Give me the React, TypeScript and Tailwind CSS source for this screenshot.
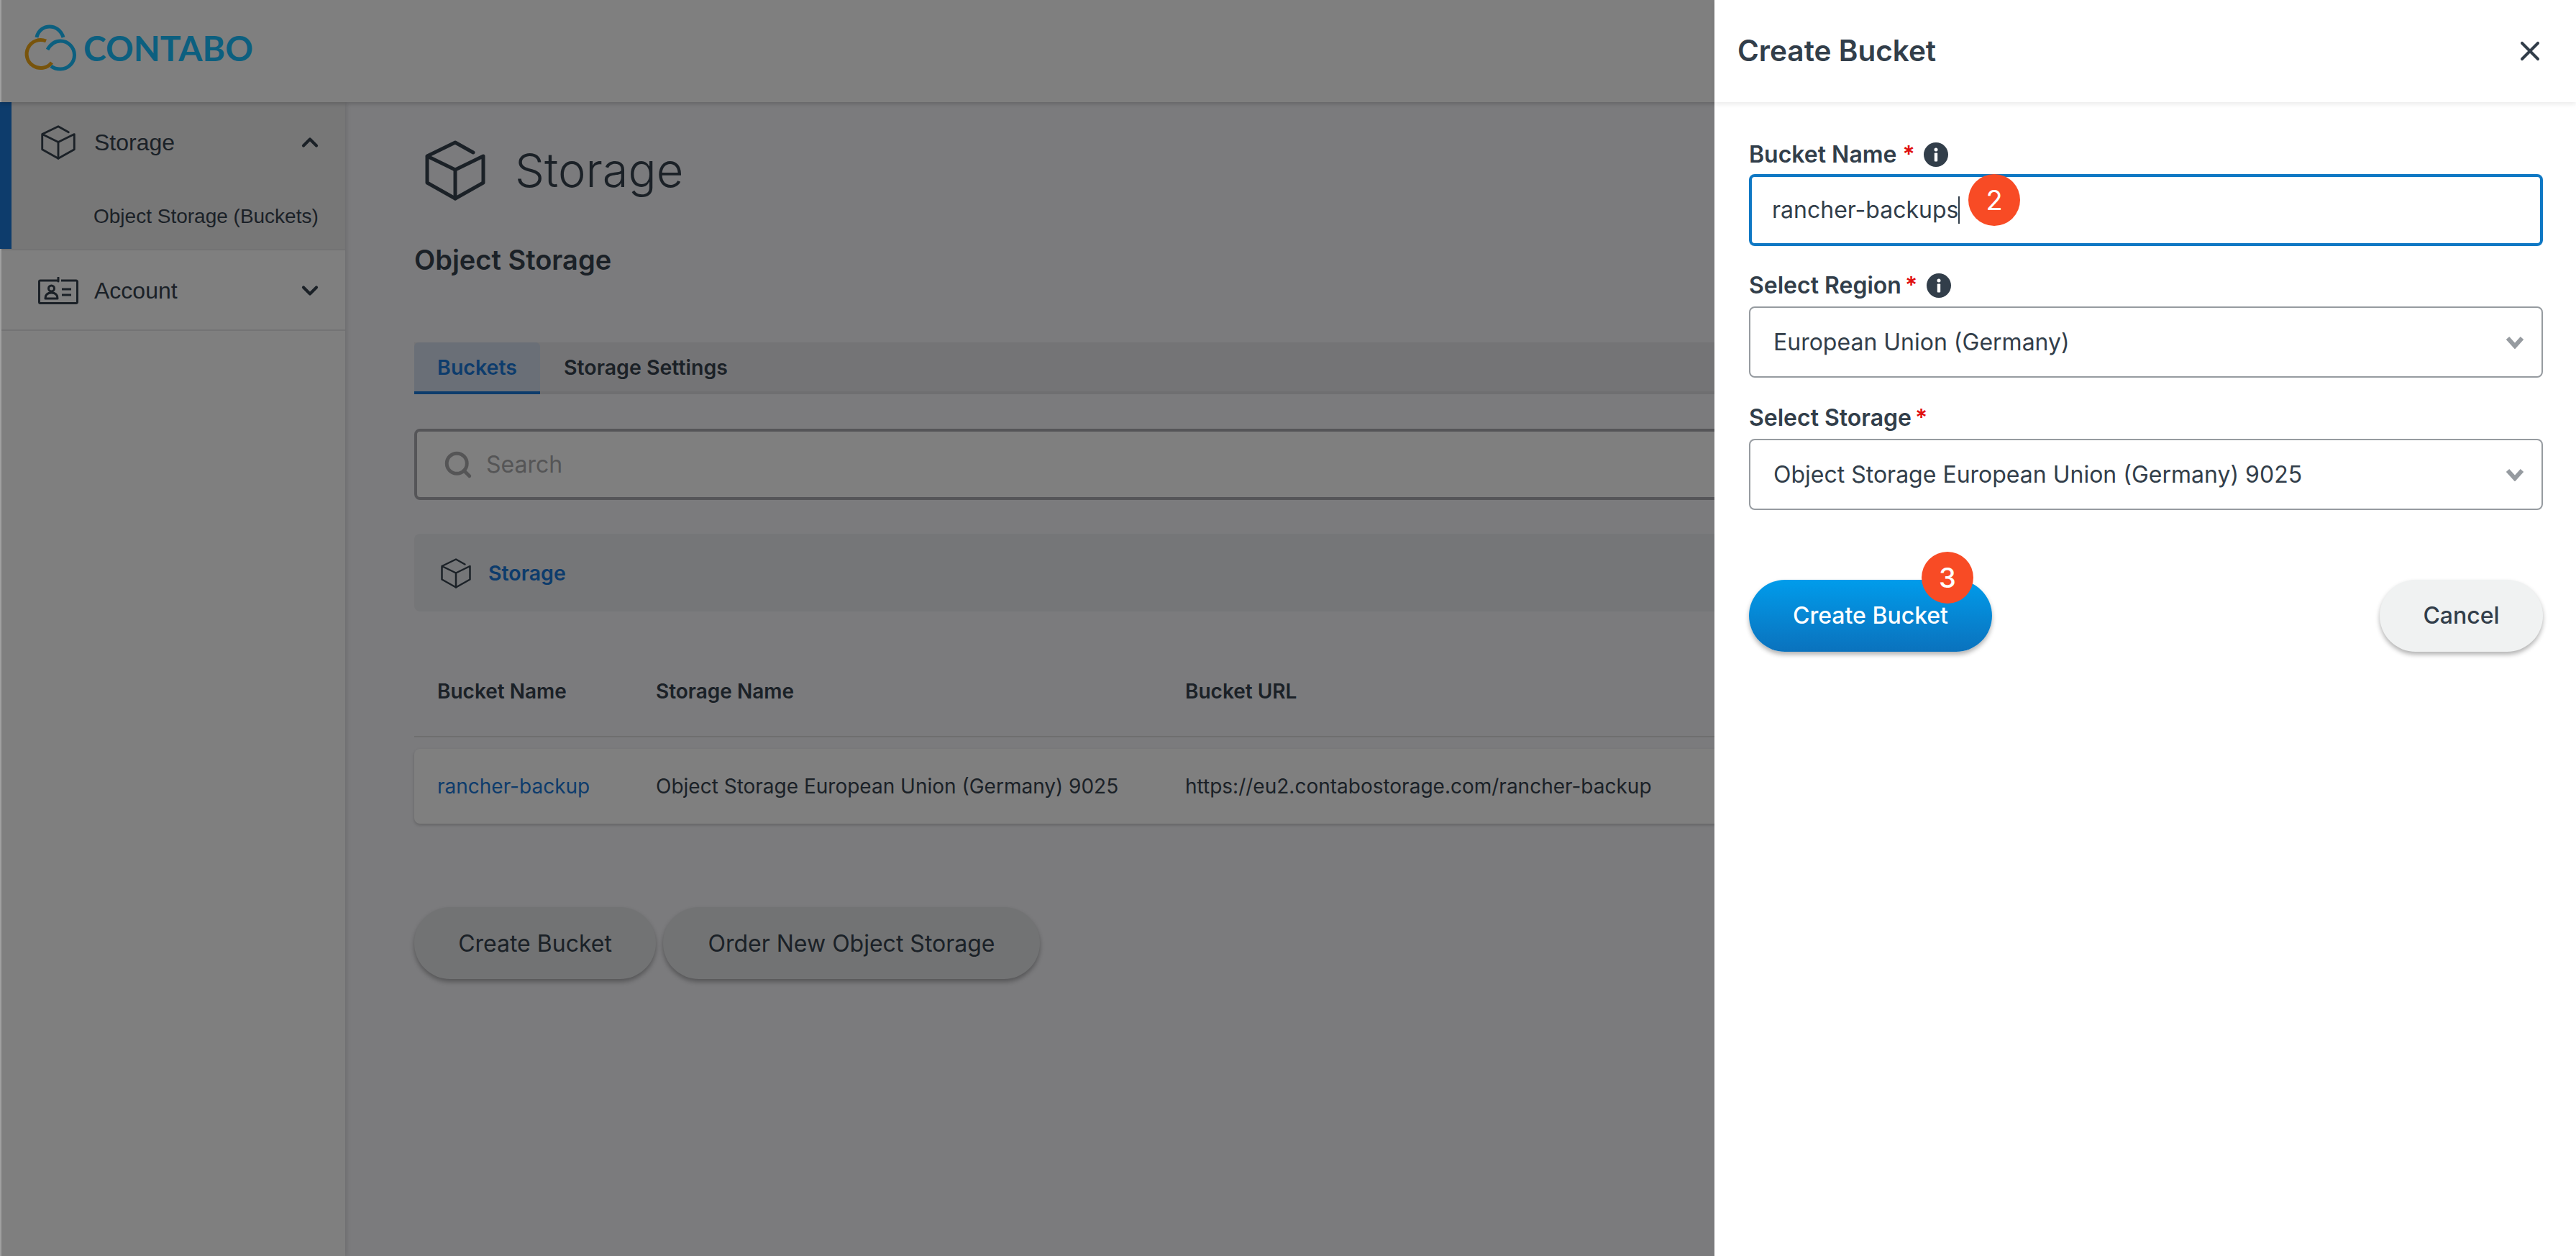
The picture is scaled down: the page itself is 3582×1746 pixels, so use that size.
import { ChevronDown, ChevronUp, Search, X } from "lucide-react";

function CubeIcon({ className }: { className: string }) {
  return (
    <svg viewBox="-3 -3 86 84" fill="none" className={className} stroke="currentColor" strokeWidth="5" strokeLinecap="round" strokeLinejoin="round">
      <path d="M65 14 40 0 1 19v37l39 22 39-22V19L40 38 1 19" />
      <path d="M40 38v40" />
    </svg>
  );
}

function CardIcon() {
  return (
    <svg viewBox="0 0 56 38" fill="none" stroke="currentColor" strokeWidth="3" strokeLinejoin="round" className="h-[38px] w-[56px]">
      <path d="M28 5H3a1.500 1.500 0 0 0-1.500 1.500V35a1.500 1.500 0 0 0 1.500 1.500h50a1.500 1.500 0 0 0 1.500-1.500V6.500A1.500 1.500 0 0 0 53 5H32" />
      <path d="M28 1v5" strokeLinecap="round" />
      <circle cx="18.500" cy="16" r="4" />
      <path d="M10 30c0-6 4-8 8.500-8s8.500 2 8.500 8z" />
      <path d="M33 17h13M33 25h13" />
    </svg>
  );
}

function Logo() {
  return (
    <svg viewBox="0 0 80 68" fill="none" strokeWidth="5" className="h-[68px] w-[80px]">
      <path d="M21 19C23 9 31 4 39 4s16 5 19 15" stroke="#18bfff" />
      <path d="M34 24A19.500 19.500 0 1 0 42 54" stroke="#f0a818" />
      <path d="M36 36c4-7 10-12 18-12a19.500 19.500 0 0 1 0 39c-5 0-9-1-13-4" stroke="#18bfff" />
    </svg>
  );
}

function InfoIcon() {
  return (
    <svg viewBox="0 0 34 34" className="h-[34px] w-[34px]">
      <circle cx="17" cy="17" r="17" fill="#323e4a" />
      <circle cx="17" cy="10" r="2.500" fill="#fff" />
      <rect x="14.800" y="14.500" width="4.400" height="12" rx="1" fill="#fff" />
    </svg>
  );
}

function SelectChevron() {
  return (
    <svg viewBox="0 0 26 18" fill="none" stroke="#969ba0" strokeWidth="6" className="h-[18px] w-[26px]">
      <path d="M3 3l10 11L23 3" />
    </svg>
  );
}

function Field({ label, info, children, starGap, infoGap }: { label: string; info?: boolean; children: React.ReactNode; starGap: string; infoGap?: string }) {
  return (
    <div>
      <div className="flex h-[36px] items-center text-[32px] font-semibold text-[#323e4a]">
        <span>{label}</span>
        <span className={`text-[#e01010] ${starGap}`}>*</span>
        {info && <span className={infoGap}><InfoIcon /></span>}
      </div>
      {children}
    </div>
  );
}

function SelectBox({ value }: { value: string }) {
  return (
    <div className="mt-[11px] flex h-[99px] items-center justify-between rounded-[8px] border-2 border-[#969ba0] pl-[32px] pr-[24px] text-[32px] text-[#323e4a]">
      <span>{value}</span>
      <SelectChevron />
    </div>
  );
}

function Badge({ n, className }: { n: number; className: string }) {
  return (
    <span className={`absolute flex h-[72px] w-[72px] items-center justify-center rounded-full bg-[#f84b25] text-[38px] text-white ${className}`}>{n}</span>
  );
}

export default function App() {
  return (
    <div className="relative flex h-[1746px] w-[3582px] flex-col overflow-hidden bg-[#f6f6fa] font-['Inter',sans-serif] text-[#37434f]">
      <header className="relative z-20 flex h-[142px] shrink-0 items-center bg-white pb-[8px] pl-[30px] shadow-[0_2px_6px_rgba(0,0,0,0.2)]">
        <Logo />
        <span className="ml-[6px] font-['Lato',sans-serif] text-[48px] font-bold text-[#18bfff]">CONTABO</span>
      </header>

      <div className="flex flex-1">
        <aside className="z-10 w-[480px] shrink-0 bg-white font-['Liberation_Sans',sans-serif] shadow-[2px_0_6px_rgba(0,0,0,0.12)]">
          <div className="h-[204px] border-l-[16px] border-[#1a78d8] bg-[#eeeeef]">
            <div className="flex h-[112px] items-center pl-[40px] pr-[31px]">
              <CubeIcon className="h-[48px] w-[50px]" />
              <span className="ml-[25px] flex-1 text-[32px]">Storage</span>
              <ChevronUp className="h-[36px] w-[36px]" strokeWidth={2.800} />
            </div>
            <div className="pl-[114px] pt-[26px] text-[28px]">Object Storage (Buckets)</div>
          </div>
          <div className="flex h-[114px] items-center border-t-2 border-b-2 border-[#e6e6e8] pl-[53px] pr-[31px] pt-[2px]">
            <CardIcon />
            <span className="ml-[22px] flex-1 text-[32px]">Account</span>
            <ChevronDown className="h-[36px] w-[36px]" strokeWidth={2.800} />
          </div>
        </aside>

        <main className="flex-1 pl-[96px] pr-[32px]">
          <div className="flex h-[184px] items-center pl-[14px] pt-[6px]">
            <CubeIcon className="h-[84px] w-[86px]" />
            <h1 className="ml-[40px] text-[65px] font-light">Storage</h1>
          </div>
          <h2 className="mt-[13px] text-[38px] font-semibold leading-[44px]">Object Storage</h2>

          <div className="mt-[93px] flex h-[72px] border-b-4 border-[#dedee2] bg-[#e8e8ec] text-[28.500px] font-semibold">
            <div className="-mb-[4px] flex w-[175px] items-center justify-center rounded-t-[6px] border-b-4 border-[#1a78d8] bg-[#d4deee] pt-[2px] text-[#1a78d8]">Buckets</div>
            <div className="ml-[33px] flex items-center pt-[2px]">Storage Settings</div>
          </div>

          <div className="mt-[48px] flex h-[99px] items-center rounded-[8px] border-4 border-[#aaaab0] bg-white pl-[36px] text-[32px] text-[#aaabad]">
            <Search className="h-[42px] w-[42px]" strokeWidth={2.800} />
            <span className="ml-[18px]">Search</span>
          </div>

          <div className="mt-[47px] flex h-[108px] items-center rounded-[8px] bg-[#eaecf0] pl-[35px] pt-[2px] text-[28.500px] font-semibold text-[#1a78d8]">
            <CubeIcon className="h-[42px] w-[46px] text-[#37434f]" />
            <span className="ml-[22px]">Storage</span>
          </div>

          <div className="flex h-[175px] items-center border-b-2 border-[#dcdcde] pt-[49px] text-[28px] font-semibold">
            <span className="ml-[32px] w-[304px]">Bucket Name</span>
            <span className="w-[736px]">Storage Name</span>
            <span>Bucket URL</span>
          </div>

          <div className="mt-[16px] flex h-[104px] items-center rounded-[8px] bg-white text-[28px] shadow-[0_2px_4px_rgba(0,0,0,0.2)]">
            <span className="ml-[32px] w-[304px] text-[#1a78d8]">rancher-backup</span>
            <span className="w-[736px]">Object Storage European Union (Germany) 9025</span>
            <span>https://eu2.contabostorage.com/rancher-backup</span>
          </div>

          <div className="mt-[116px] flex gap-[10px] text-[32px]">
            <div className="flex h-[100px] w-[336px] items-center justify-center rounded-[50px] bg-[#e4e6e8] pt-[2px] shadow-[0_4px_6px_rgba(0,0,0,0.3)]">Create Bucket</div>
            <div className="flex h-[100px] w-[524px] items-center justify-center rounded-[50px] bg-[#e4e6e8] pt-[2px] shadow-[0_4px_6px_rgba(0,0,0,0.3)]">Order New Object Storage</div>
          </div>
        </main>
      </div>

      {/* dimmed backdrop */}
      <div className="absolute inset-0 z-30 bg-black/50" />
      <div className="absolute left-0 top-0 z-30 h-[142px] w-[2px] bg-[#a0a0a0]" />
      <div className="absolute bottom-0 left-0 top-[346px] z-30 w-[2px] bg-[#a0a0a0]" />

      {/* slide-over panel */}
      <section className="absolute bottom-0 right-0 top-0 z-40 w-[1198px] bg-white text-[#323e4a]">
        <div className="flex h-[142px] items-center justify-between pl-[32px] pr-[42px] shadow-[0_3px_6px_rgba(0,0,0,0.08)]">
          <h3 className="text-[40.500px] font-semibold">Create Bucket</h3>
          <X className="h-[44px] w-[44px]" strokeWidth={2.200} />
        </div>

        <div className="pl-[48px] pr-[46px] pt-[55px]">
          <Field label="Bucket Name" info starGap="ml-[8px]" infoGap="ml-[12px]">
            <div className="relative mt-[9px] flex h-[100px] items-center rounded-[8px] border-4 border-[#0f78c4] pl-[28px] text-[32px]">
              <span>rancher-backups</span>
              <span className="h-[38px] w-[2px] bg-[#323e4a]" />
              <Badge n={2} className="left-[301px] top-[-4px]" />
            </div>
          </Field>
          <div className="mt-[37px]">
            <Field label="Select Region" info starGap="ml-[5px]" infoGap="ml-[13px]">
              <SelectBox value="European Union (Germany)" />
            </Field>
          </div>
          <div className="mt-[38px]">
            <Field label="Select Storage" starGap="ml-[5px]">
              <SelectBox value="Object Storage European Union (Germany) 9025" />
            </Field>
          </div>

          <div className="mt-[97px] flex justify-between text-[32px]">
            <div className="relative flex h-[100px] w-[338px] items-center justify-center rounded-[50px] bg-gradient-to-b from-[#009ceb] to-[#0a72bd] font-medium text-white shadow-[0_4px_6px_rgba(0,0,0,0.3)]">
              Create Bucket
              <Badge n={3} className="left-[240px] top-[-39px]" />
            </div>
            <div className="flex h-[100px] w-[227px] items-center justify-center rounded-[50px] bg-[#f0f2f2] font-medium shadow-[0_4px_6px_rgba(0,0,0,0.3)]">Cancel</div>
          </div>
        </div>
      </section>
    </div>
  );
}
